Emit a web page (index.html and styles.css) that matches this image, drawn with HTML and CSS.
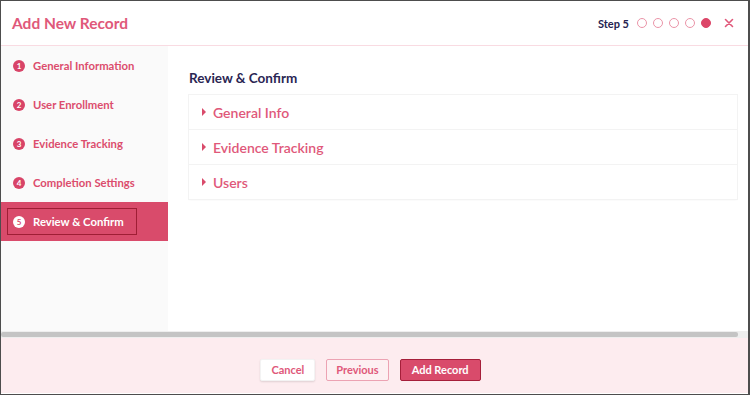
FILE: index.html
```html
<!DOCTYPE html>
<html>
<head>
<meta charset="utf-8">
<link rel="stylesheet" href="styles.css">
</head>
<body>
<div class="frame">
  <header class="top">
    <h1 class="title">Add New Record</h1>
    <div class="steps">
      <span class="step-label">Step 5</span>
      <span class="dot"></span><span class="dot"></span><span class="dot"></span><span class="dot"></span><span class="dot on"></span>
      <svg class="close" width="10" height="10" viewBox="0 0 10 10"><path d="M1.5 1.5L8.5 8.5M8.5 1.5L1.5 8.5" stroke="#e0587a" stroke-width="1.6" stroke-linecap="round"/></svg>
    </div>
  </header>
  <div class="body">
    <nav class="side">
      <div class="item"><span class="num">1</span>General Information</div>
      <div class="item"><span class="num">2</span>User Enrollment</div>
      <div class="item"><span class="num">3</span>Evidence Tracking</div>
      <div class="item"><span class="num">4</span>Completion Settings</div>
      <div class="item active"><div class="focus"><span class="num">5</span>Review &amp; Confirm</div></div>
    </nav>
    <main class="main">
      <h2 class="heading">Review &amp; Confirm</h2>
      <div class="panel"><span class="caret"></span>General Info</div>
      <div class="panel"><span class="caret"></span>Evidence Tracking</div>
      <div class="panel"><span class="caret"></span>Users</div>
    </main>
  </div>
  <div class="scroll"><div class="thumb"></div></div>
  <footer class="foot">
    <button class="btn cancel">Cancel</button>
    <button class="btn prev">Previous</button>
    <button class="btn add">Add Record</button>
  </footer>
</div>
</body>
</html>
```
FILE: styles.css
```css
* { box-sizing: border-box; }
html, body { margin: 0; padding: 0; background: #fff; }
body { font-family: Lato, "Open Sans", sans-serif; }
.frame {
  width: 750px; height: 395px;
  border: 1px solid #4d4d4d;
  border-right-width: 2px;
  display: flex; flex-direction: column;
  background: #fff;
}
.top {
  height: 45px; flex: none;
  display: flex; align-items: center; justify-content: space-between;
  padding: 0 14px 0 11px;
  border-bottom: 1px solid #f9dbe2;
}
.title { margin: 0; font-size: 15.5px; font-weight: 700; color: #e0587a; }
.steps { display: flex; align-items: center; }
.step-label { font-size: 11px; font-weight: 700; color: #252250; margin-right: 8px; }
.dot {
  width: 10px; height: 10px; border-radius: 50%;
  border: 1.5px solid #eb94a8; margin-right: 6px;
}
.dot.on { background: #dc4668; border-color: #dc4668; }
.close { margin-left: 7px; }
.body { height: 285px; flex: none; display: flex; }
.side {
  width: 167px; flex: none; background: #fafafa;
}
.item {
  height: 39px; display: flex; align-items: center;
  padding-left: 12px;
  font-size: 11.3px; font-weight: 700; color: #dc4d6d;
}
.num {
  width: 12px; height: 12px; border-radius: 50%;
  background: #d84468; color: #fff;
  font-size: 8px; font-weight: 700;
  display: inline-flex; align-items: center; justify-content: center;
  margin-right: 8px;
}
.item.active {
  background: #d94b6b; color: #fff;
  padding-left: 6px;
}
.item.active .focus {
  width: 130px; height: 27px;
  border: 1.5px solid #9f1e35;
  display: flex; align-items: center; padding-left: 5px;
}
.item.active .num { background: #fff; color: #d94b6b; }
.main { flex: 1; padding: 24px 11px 0 21px; }
.heading { margin: 0 0 9px; font-size: 13.5px; font-weight: 700; color: #2a2653; }
.panel {
  height: 34px; margin-bottom: 1px;
  display: flex; align-items: center;
  padding-left: 13px;
  font-size: 14px; font-weight: 600; color: #e0587a;
  background: #fff;
  box-shadow: 0 0 0 1px #f3f3f3, 0 1px 2px rgba(0,0,0,0.05);
}
.caret {
  width: 0; height: 0;
  border-top: 4px solid transparent; border-bottom: 4px solid transparent;
  border-left: 4px solid #d94b6b;
  margin-right: 7px;
}
.scroll { height: 7px; flex: none; padding: 1px 10px 1px 0; background: #eeeeee; }
.thumb { height: 5px; background: #c4c4c4; border-radius: 2px; }
.foot {
  flex: 1; background: #fdecef;
  display: flex; align-items: center; justify-content: center;
  gap: 11px; padding-right: 8px; padding-top: 8px;
  border-bottom: 1px solid #fff;
}
.btn {
  font-family: Lato, "Open Sans", sans-serif;
  font-size: 11px; font-weight: 700;
  height: 22px;
  border-radius: 2px; cursor: pointer;
}
.cancel { background: #fff; color: #e0587a; border: 1px solid #f3f3f3; box-shadow: 0 1px 2px rgba(0,0,0,0.12); padding: 0 10px; }
.prev { background: #fdf0f2; color: #e0587a; border: 1px solid #eca3b3; padding: 0 9px; }
.add { background: #d94b6b; color: #fff; border: 1.5px solid #a51f3a; padding: 0 11px; }
```
